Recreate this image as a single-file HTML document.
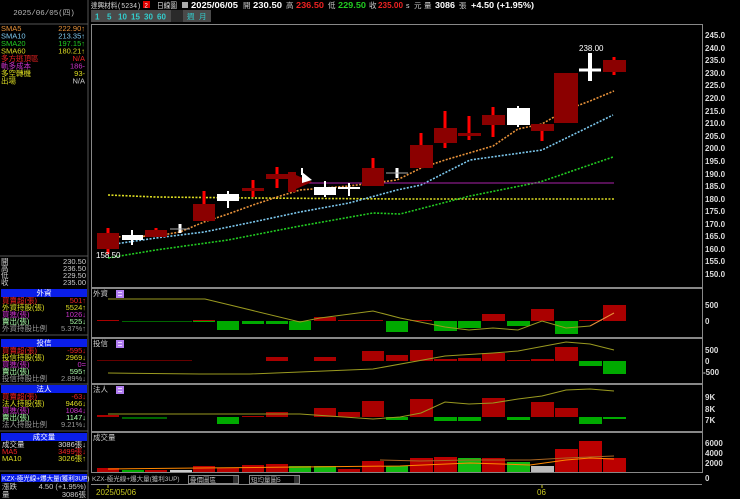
<!DOCTYPE html>
<html><head><meta charset="utf-8"><style>
html,body{margin:0;padding:0;background:#000;width:740px;height:499px;overflow:hidden}
svg{display:block}
text{font-family:"Liberation Sans","Noto Sans CJK TC",sans-serif}
.s{font-family:"Liberation Mono","Noto Sans CJK TC",monospace;font-size:7.5px}
.ax{font-family:"Liberation Sans",sans-serif;font-size:8px;fill:#ddd;font-weight:bold}
</style></head><body>
<svg width="740" height="499" viewBox="0 0 740 499" xmlns="http://www.w3.org/2000/svg">
<rect width="740" height="499" fill="#000"/>
<!-- header -->
<text x="91" y="8" class="s" fill="#ddd" textLength="50" lengthAdjust="spacingAndGlyphs">達興材料(5234)</text>
<rect x="143" y="1" width="7" height="7" fill="#d00"/><text x="144.5" y="7.5" font-size="6" fill="#fff">2</text>
<text x="157" y="8" class="s" fill="#ddd" textLength="20" lengthAdjust="spacingAndGlyphs">日線圖</text>
<rect x="182" y="2" width="6" height="6" fill="#aaa"/>
<text x="191" y="8" font-size="8.5" font-weight="bold" fill="#fff" textLength="47" lengthAdjust="spacingAndGlyphs">2025/06/05</text>
<text x="243" y="8" class="s" fill="#ccc">開</text><text x="253" y="8" font-size="8.5" font-weight="bold" fill="#fff" textLength="29" lengthAdjust="spacingAndGlyphs">230.50</text>
<text x="286" y="8" class="s" fill="#ccc">高</text><text x="296" y="8" font-size="8.5" font-weight="bold" fill="#e22" textLength="28" lengthAdjust="spacingAndGlyphs">236.50</text>
<text x="328" y="8" class="s" fill="#ccc">低</text><text x="338" y="8" font-size="8.5" font-weight="bold" fill="#2c2" textLength="28" lengthAdjust="spacingAndGlyphs">229.50</text>
<text x="369" y="8" class="s" fill="#ccc">收</text><text x="378" y="8" font-size="8.5" font-weight="bold" fill="#e22" textLength="25" lengthAdjust="spacingAndGlyphs">235.00</text>
<text x="406" y="8" font-size="7" fill="#ddd">s</text><text x="414" y="8" class="s" fill="#ccc">元</text><text x="424" y="8" class="s" fill="#ccc">量</text>
<text x="435" y="8" font-size="8.5" font-weight="bold" fill="#fff" textLength="20" lengthAdjust="spacingAndGlyphs">3086</text><text x="459" y="8" class="s" fill="#ccc">張</text>
<text x="471" y="8" font-size="8.5" font-weight="bold" fill="#fff" textLength="63" lengthAdjust="spacingAndGlyphs">+4.50 (+1.95%)</text>
<!-- buttons -->
<rect x="91" y="10" width="120" height="12" fill="#4a4a4a"/>
<g fill="#3cc" font-size="8" font-weight="bold">
<text x="95" y="19.5">1</text><text x="107" y="19.5">5</text><text x="118" y="19.5">10</text><text x="131" y="19.5">15</text><text x="144" y="19.5">30</text><text x="157" y="19.5">60</text></g>
<rect x="171" y="10" width="12" height="12" fill="#2a2a2a"/>
<text x="187" y="19" class="s" fill="#3cc">週</text><text x="199" y="19" class="s" fill="#3cc">月</text>
<!-- left panel -->
<line x1="88" y1="0" x2="88" y2="499" stroke="#555"/>
<text x="44" y="15" class="s" fill="#bbb" text-anchor="middle">2025/06/05(四)</text>
<line x1="0" y1="24" x2="88" y2="24" stroke="#555"/>
<g class="s">
<text x="1" y="31" fill="#e8923a">SMA5</text><text x="85" y="31" fill="#e8923a" text-anchor="end">222.90↑</text>
<text x="1" y="38.5" fill="#7cc8ee">SMA10</text><text x="85" y="38.5" fill="#7cc8ee" text-anchor="end">213.35↑</text>
<text x="1" y="46" fill="#2c2">SMA20</text><text x="85" y="46" fill="#2c2" text-anchor="end">197.15↑</text>
<text x="1" y="53.5" fill="#dd2">SMA60</text><text x="85" y="53.5" fill="#dd2" text-anchor="end">180.21↑</text>
<text x="1" y="61" fill="#e22">多方逃頂區</text><text x="85" y="61" fill="#e22" text-anchor="end">N/A</text>
<text x="1" y="68.5" fill="#c3c">軌多成本</text><text x="85" y="68.5" fill="#c3c" text-anchor="end">186-</text>
<text x="1" y="76" fill="#dd2">多空轉機</text><text x="85" y="76" fill="#dd2" text-anchor="end">93-</text>
<text x="1" y="83.5" fill="#dd2">出場</text><text x="85" y="83.5" fill="#ccc" text-anchor="end">N/A</text>
</g>
<line x1="0" y1="256" x2="88" y2="256" stroke="#555"/>
<g class="s" fill="#ccc">
<text x="1" y="264">開</text><text x="86" y="264" text-anchor="end">230.50</text>
<text x="1" y="271">高</text><text x="86" y="271" text-anchor="end">236.50</text>
<text x="1" y="278">低</text><text x="86" y="278" text-anchor="end">229.50</text>
<text x="1" y="285">收</text><text x="86" y="285" text-anchor="end">235.00</text>
</g>
<!-- sections -->
<g class="s">
<rect x="1" y="289" width="86" height="8" fill="#0a1ee8"/><text x="44" y="295.5" fill="#fff" text-anchor="middle">外資</text>
<text x="2" y="303" fill="#e22">買賣超(張)</text><text x="86" y="303" fill="#e22" text-anchor="end">501↑</text>
<text x="2" y="310" fill="#dd2">外資持股(張)</text><text x="86" y="310" fill="#dd2" text-anchor="end">5524↑</text>
<text x="2" y="317" fill="#c3c">買進(張)</text><text x="86" y="317" fill="#c3c" text-anchor="end">1026↓</text>
<text x="2" y="324" fill="#afa">賣出(張)</text><text x="86" y="324" fill="#afa" text-anchor="end">525↓</text>
<text x="2" y="331" fill="#999">外資持股比例</text><text x="86" y="331" fill="#999" text-anchor="end">5.37%↑</text>
<line x1="0" y1="335" x2="88" y2="335" stroke="#555"/>
<rect x="1" y="339" width="86" height="8" fill="#0a1ee8"/><text x="44" y="345.5" fill="#fff" text-anchor="middle">投信</text>
<text x="2" y="353" fill="#e22">買賣超(張)</text><text x="86" y="353" fill="#e22" text-anchor="end">-595↓</text>
<text x="2" y="360" fill="#dd2">投信持股(張)</text><text x="86" y="360" fill="#dd2" text-anchor="end">2969↓</text>
<text x="2" y="367" fill="#c3c">買進(張)</text><text x="86" y="367" fill="#c3c" text-anchor="end">0=</text>
<text x="2" y="374" fill="#afa">賣出(張)</text><text x="86" y="374" fill="#afa" text-anchor="end">595↑</text>
<text x="2" y="381" fill="#999">投信持股比例</text><text x="86" y="381" fill="#999" text-anchor="end">2.89%↓</text>
<line x1="0" y1="384" x2="88" y2="384" stroke="#555"/>
<rect x="1" y="385" width="86" height="8" fill="#0a1ee8"/><text x="44" y="391.5" fill="#fff" text-anchor="middle">法人</text>
<text x="2" y="399" fill="#e22">買賣超(張)</text><text x="86" y="399" fill="#e22" text-anchor="end">-63↓</text>
<text x="2" y="406" fill="#dd2">法人持股(張)</text><text x="86" y="406" fill="#dd2" text-anchor="end">9466↓</text>
<text x="2" y="413" fill="#c3c">買進(張)</text><text x="86" y="413" fill="#c3c" text-anchor="end">1084↓</text>
<text x="2" y="420" fill="#afa">賣出(張)</text><text x="86" y="420" fill="#afa" text-anchor="end">1147↓</text>
<text x="2" y="427" fill="#999">法人持股比例</text><text x="86" y="427" fill="#999" text-anchor="end">9.21%↓</text>
<line x1="0" y1="431" x2="88" y2="431" stroke="#555"/>
<rect x="1" y="433" width="86" height="8" fill="#0a1ee8"/><text x="44" y="439.5" fill="#fff" text-anchor="middle">成交量</text>
<text x="2" y="447" fill="#ddd">成交量</text><text x="86" y="447" fill="#ddd" text-anchor="end">3086張↓</text>
<text x="2" y="454" fill="#e22">MA5</text><text x="86" y="454" fill="#e22" text-anchor="end">3499張↓</text>
<text x="2" y="461" fill="#dd2">MA10</text><text x="86" y="461" fill="#dd2" text-anchor="end">3026張↑</text>
<line x1="0" y1="471" x2="88" y2="471" stroke="#555"/>
<rect x="1" y="474" width="86" height="8" fill="#0a1ee8"/><text x="2" y="480.5" fill="#fff" font-size="6.5">KZX-極光線+爆大量(獲利3UP)</text>
<text x="2" y="489" fill="#ccc">漲跌</text><text x="86" y="489" fill="#ccc" text-anchor="end">4.50 (+1.95%)</text>
<text x="2" y="497" fill="#ccc">量</text><text x="86" y="497" fill="#ccc" text-anchor="end">3086張</text>
</g>
<!-- main chart frame -->
<rect x="91.5" y="24.5" width="611" height="263" fill="none" stroke="#888"/>
<g class="ax">
<text x="705" y="38">245.0</text><text x="705" y="51">240.0</text><text x="705" y="63">235.0</text><text x="705" y="76">230.0</text><text x="705" y="88">225.0</text><text x="705" y="101">220.0</text><text x="705" y="114">215.0</text><text x="705" y="126">210.0</text><text x="705" y="139">205.0</text><text x="705" y="151">200.0</text><text x="705" y="164">195.0</text><text x="705" y="177">190.0</text><text x="705" y="189">185.0</text><text x="705" y="202">180.0</text><text x="705" y="214">175.0</text><text x="705" y="227">170.0</text><text x="705" y="239">165.0</text><text x="705" y="252">160.0</text><text x="705" y="264">155.0</text><text x="705" y="277">150.0</text>
</g>
<!-- MA lines -->
<g fill="none" stroke-width="1.6" stroke-dasharray="2 1.5">
<polyline stroke="#dd2" points="108,195 156,197 253,198 400,199 614,199"/>
<polyline stroke="#2c2" points="108,258 156,250 228,240 300,226 373,213 400,214 470,196 540,182 613,157"/>
<polyline stroke="#7cc8ee" points="108,245 156,238 204,232 253,222 300,212 349,203 397,190 421,185 470,160 542,150 613,115"/>
<polyline stroke="#e8923a" points="108,237 156,236 180,232 204,222 228,214 253,205 277,197 300,190 325,188 349,186 373,183 397,180 421,168 445,160 469,153 493,146 518,129 542,124 566,110 590,101 614,91"/>
</g>
<line x1="300" y1="183" x2="614" y2="183" stroke="#a2a" stroke-width="1"/>
<!-- candles -->
<g fill="#8b0000">
<line x1="108" y1="228" x2="108" y2="254" stroke="#f00" stroke-width="3"/><rect x="97" y="233" width="22" height="16"/>
<rect x="145" y="230" width="22" height="7"/><line x1="156" y1="228" x2="156" y2="230" stroke="#f00" stroke-width="3"/>
<line x1="204" y1="191" x2="204" y2="205" stroke="#f00" stroke-width="3"/><rect x="193" y="204" width="22" height="17"/>
<line x1="253" y1="180" x2="253" y2="197" stroke="#f00" stroke-width="3"/><rect x="242" y="188" width="22" height="3"/>
<line x1="277" y1="167" x2="277" y2="188" stroke="#f00" stroke-width="3"/><rect x="266" y="174" width="22" height="5"/>
<polygon points="289,172 312,182 289,192"/><rect x="288" y="172" width="8" height="20"/>
<line x1="373" y1="158" x2="373" y2="168" stroke="#f00" stroke-width="3"/><rect x="362" y="168" width="22" height="18"/>
<line x1="421" y1="133" x2="421" y2="145" stroke="#f00" stroke-width="3"/><rect x="410" y="145" width="23" height="23"/>
<line x1="445" y1="111" x2="445" y2="148" stroke="#f00" stroke-width="3"/><rect x="434" y="128" width="23" height="15"/>
<line x1="469" y1="116" x2="469" y2="140" stroke="#f00" stroke-width="3"/><rect x="458" y="133" width="23" height="3"/>
<line x1="493" y1="107" x2="493" y2="137" stroke="#f00" stroke-width="3"/><rect x="482" y="115" width="23" height="10"/>
<line x1="542" y1="124" x2="542" y2="141" stroke="#f00" stroke-width="3"/><rect x="531" y="124" width="23" height="7"/>
<rect x="554" y="73" width="24" height="50"/>
<line x1="614" y1="57" x2="614" y2="75" stroke="#f00" stroke-width="3"/><rect x="603" y="60" width="23" height="12"/>
</g>
<g fill="#fff" stroke="#fff">
<line x1="132" y1="230" x2="132" y2="245" stroke-width="2"/><rect x="122" y="235" width="21" height="5" stroke="none"/>
<line x1="180" y1="224" x2="180" y2="233" stroke-width="3"/><line x1="170" y1="229" x2="190" y2="229" stroke="#aaa"/>
<line x1="228" y1="191" x2="228" y2="208" stroke-width="2"/><rect x="217" y="194" width="22" height="7" stroke="none"/>
<polygon points="302,172 312,180 302,183" stroke="none"/><line x1="302" y1="168" x2="302" y2="175" stroke-width="2"/>
<line x1="325" y1="181" x2="325" y2="197" stroke-width="2"/><rect x="314" y="187" width="22" height="8" stroke="none"/>
<line x1="349" y1="183" x2="349" y2="196" stroke-width="2"/><line x1="338" y1="188" x2="360" y2="188" stroke-width="2"/>
<line x1="397" y1="168" x2="397" y2="178" stroke-width="3"/><line x1="386" y1="173" x2="408" y2="173" stroke="#aaa"/>
<line x1="518" y1="106" x2="518" y2="127" stroke-width="2"/><rect x="507" y="108" width="23" height="17" stroke="none"/>
<line x1="590" y1="53" x2="590" y2="81" stroke-width="4"/><line x1="579" y1="70" x2="601" y2="70" stroke-width="3"/>
</g>
<text x="579" y="51" font-size="8" fill="#fff" font-family="Liberation Sans">238.00</text>
<text x="96" y="258" font-size="8" fill="#fff" font-family="Liberation Serif">158.50</text>
<!-- panel frames -->
<g fill="none" stroke="#888">
<rect x="91.5" y="288.5" width="611" height="49"/>
<rect x="91.5" y="338.5" width="611" height="45"/>
<rect x="91.5" y="384.5" width="611" height="47"/>
<rect x="91.5" y="432.5" width="611" height="40"/>
</g>
<g font-size="7.5" fill="#ccc" font-family="Noto Sans CJK TC,sans-serif">
<text x="93" y="296">外資</text><text x="93" y="346">投信</text><text x="93" y="392">法人</text><text x="93" y="440">成交量</text>
</g>
<g fill="#b07cf0"><rect x="116" y="290" width="8" height="8"/><rect x="116" y="340" width="8" height="8"/><rect x="116" y="386" width="8" height="8"/></g>
<g stroke="#fff" stroke-width="0.7"><line x1="118" y1="292.5" x2="122" y2="292.5"/><line x1="118" y1="295.5" x2="122" y2="295.5"/><line x1="118" y1="342.5" x2="122" y2="342.5"/><line x1="118" y1="345.5" x2="122" y2="345.5"/><line x1="118" y1="388.5" x2="122" y2="388.5"/><line x1="118" y1="391.5" x2="122" y2="391.5"/></g>
<g class="ax">
<text x="705" y="308">500</text><text x="705" y="324">0</text>
<text x="705" y="353">500</text><text x="705" y="364">0</text><text x="703" y="375">-500</text>
<text x="705" y="400">9K</text><text x="705" y="412">8K</text><text x="705" y="423">7K</text>
<text x="705" y="446">6000</text><text x="705" y="456">4000</text><text x="705" y="466">2000</text><text x="705" y="481">0</text>
</g>
<!-- panel1 bars -->
<g>
<rect x="97" y="320" width="22" height="1" fill="#a00"/>
<rect x="122" y="321" width="70" height="1" fill="#060"/>
<rect x="193" y="320" width="22" height="1" fill="#a00"/>
<rect x="193" y="321" width="22" height="1" fill="#0a0"/>
<rect x="217" y="321" width="22" height="9" fill="#0a0"/>
<rect x="242" y="321" width="22" height="3" fill="#0a0"/>
<rect x="266" y="321" width="22" height="3" fill="#0a0"/>
<rect x="289" y="321" width="22" height="9" fill="#0a0"/>
<rect x="314" y="317" width="22" height="4" fill="#a00"/>
<rect x="338" y="320" width="45" height="1" fill="#a00"/>
<rect x="386" y="321" width="22" height="11" fill="#0a0"/>
<rect x="410" y="320" width="22" height="1" fill="#a00"/>
<rect x="434" y="321" width="23" height="10" fill="#0a0"/>
<rect x="458" y="321" width="23" height="7" fill="#0a0"/>
<rect x="482" y="314" width="23" height="7" fill="#a00"/>
<rect x="507" y="321" width="23" height="5" fill="#0a0"/>
<rect x="531" y="309" width="23" height="12" fill="#a00"/>
<rect x="555" y="321" width="23" height="13" fill="#0a0"/>
<rect x="579" y="320" width="23" height="1" fill="#a00"/>
<rect x="603" y="305" width="23" height="16" fill="#a00"/>
<polyline fill="none" stroke="#9a9a20" points="108,299 205,299 230,305 300,322 320,318 373,311 400,318 445,327 469,330 493,328 518,330 542,321 566,328 590,326"/>
<polyline fill="none" stroke="#e8923a" points="590,326 614,313"/>
</g>
<!-- panel2 bars -->
<g fill="#a00">
<rect x="97" y="360" width="95" height="1" fill="#600"/>
<rect x="266" y="357" width="22" height="4"/>
<rect x="314" y="357" width="22" height="4"/>
<rect x="362" y="351" width="22" height="10"/>
<rect x="386" y="355" width="22" height="6"/>
<rect x="410" y="350" width="23" height="11"/>
<rect x="434" y="359" width="23" height="2"/>
<rect x="458" y="358" width="23" height="3"/>
<rect x="482" y="353" width="23" height="8"/>
<rect x="507" y="360" width="23" height="1"/>
<rect x="531" y="359" width="23" height="2"/>
<rect x="555" y="347" width="23" height="14"/>
<rect x="579" y="361" width="23" height="5" fill="#0a0"/>
<rect x="603" y="361" width="23" height="13" fill="#0a0"/>
<polyline fill="none" stroke="#9a9a20" points="108,373 200,374 250,374 300,372 373,369 445,356 493,353 518,351 566,342 590,344 614,350"/>
</g>
<!-- panel3 bars -->
<g fill="#a00">
<rect x="97" y="415" width="22" height="2"/>
<rect x="122" y="417" width="45" height="2" fill="#060"/>
<rect x="217" y="417" width="22" height="7" fill="#0a0"/>
<rect x="242" y="416" width="22" height="1"/>
<rect x="266" y="412" width="22" height="5"/>
<rect x="314" y="408" width="22" height="9"/>
<rect x="338" y="412" width="22" height="5"/>
<rect x="362" y="401" width="22" height="16"/>
<rect x="386" y="417" width="22" height="3" fill="#0a0"/>
<rect x="410" y="399" width="23" height="18"/>
<rect x="434" y="417" width="23" height="4" fill="#0a0"/>
<rect x="458" y="417" width="23" height="4" fill="#0a0"/>
<rect x="482" y="398" width="23" height="19"/>
<rect x="507" y="417" width="23" height="3" fill="#0a0"/>
<rect x="531" y="402" width="23" height="15"/>
<rect x="555" y="408" width="23" height="9"/>
<rect x="579" y="417" width="23" height="7" fill="#0a0"/>
<rect x="603" y="417" width="23" height="2" fill="#0a0"/>
<polyline fill="none" stroke="#9a9a20" points="108,414 300,414 373,419 400,417 421,413 445,402 469,404 493,403 518,399 542,396 566,390 590,389 614,391"/>
</g>
<!-- volume -->
<g fill="#b00">
<rect x="97" y="468" width="22" height="4"/>
<rect x="122" y="470" width="22" height="2" fill="#0a0"/>
<rect x="145" y="470" width="22" height="2"/>
<rect x="170" y="470" width="22" height="2" fill="#ccc"/>
<rect x="193" y="466" width="22" height="6"/>
<rect x="217" y="468" width="22" height="4"/>
<rect x="242" y="465" width="22" height="7"/>
<rect x="266" y="464" width="22" height="8"/>
<rect x="289" y="466" width="22" height="6" fill="#1b1"/>
<rect x="314" y="466" width="22" height="6" fill="#1b1"/>
<rect x="338" y="469" width="22" height="3"/>
<rect x="362" y="461" width="22" height="11"/>
<rect x="386" y="466" width="22" height="6" fill="#1b1"/>
<rect x="410" y="458" width="23" height="14"/>
<rect x="434" y="457" width="23" height="15"/>
<rect x="458" y="458" width="23" height="14" fill="#1b1"/>
<rect x="482" y="458" width="23" height="14"/>
<rect x="507" y="462" width="23" height="10" fill="#1b1"/>
<rect x="531" y="466" width="23" height="6" fill="#bbb"/>
<rect x="555" y="449" width="23" height="23"/>
<rect x="579" y="441" width="23" height="31"/>
<rect x="603" y="458" width="23" height="14"/>
<polyline fill="none" stroke="#f80" points="108,469 200,468 300,467 400,466 470,463 530,465 566,460 590,458 614,459"/>
<polyline fill="none" stroke="#a62" points="380,460 420,461 470,460 530,460 566,458 614,456"/>
</g>
<!-- bottom bar -->
<line x1="91" y1="484.5" x2="702" y2="484.5" stroke="#888"/>
<text x="92" y="481" font-size="6.5" fill="#bbb" font-family="Liberation Mono,Noto Sans CJK TC,monospace">KZX-極光線+爆大量(獲利3UP)</text>
<rect x="188.5" y="475.5" width="50" height="8" fill="#000" stroke="#888"/><text x="190" y="482" font-size="6.5" fill="#bbb" font-family="Noto Sans CJK TC,sans-serif">疊價圖區</text>
<rect x="233" y="476" width="5" height="7" fill="#333"/>
<rect x="249.5" y="475.5" width="50" height="8" fill="#000" stroke="#888"/><text x="251" y="482" font-size="6.5" fill="#bbb" font-family="Noto Sans CJK TC,sans-serif">短均量圖5</text>
<rect x="294" y="476" width="5" height="7" fill="#333"/>
<text x="96" y="495" font-size="8" fill="#cc2">2025/05/06</text>
<line x1="108" y1="485" x2="108" y2="488" stroke="#cc2"/>
<text x="537" y="495" font-size="8" fill="#cc2">06</text>
<line x1="542" y1="485" x2="542" y2="488" stroke="#cc2"/>
</svg>
</body></html>
